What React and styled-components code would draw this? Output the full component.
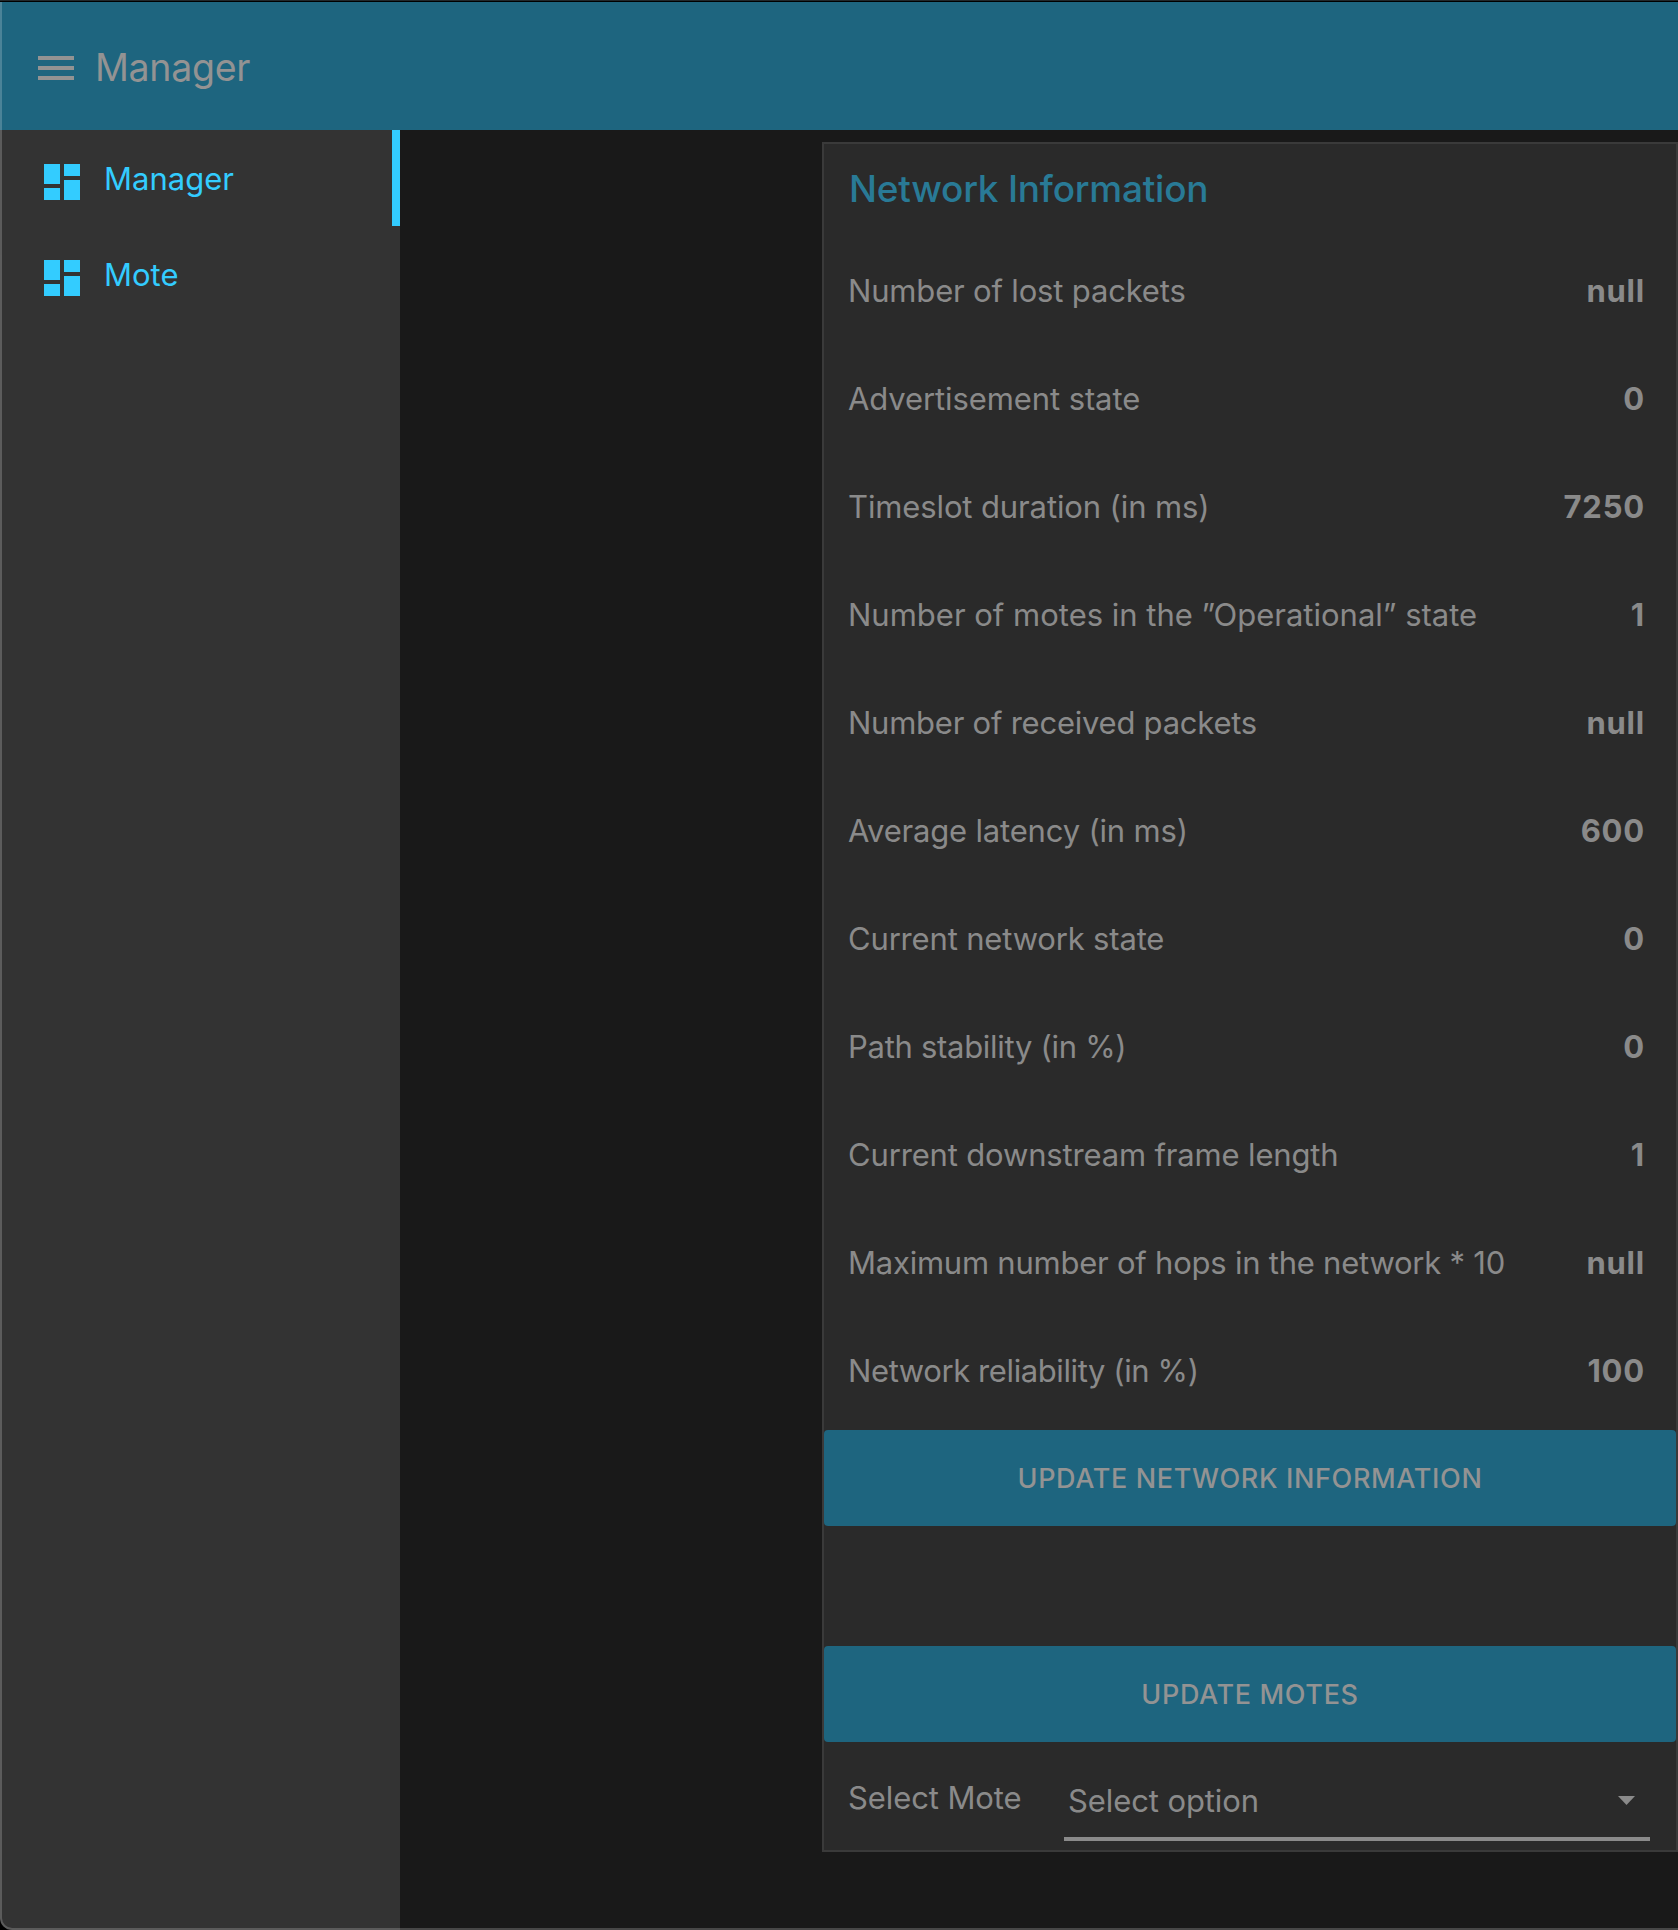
import React from 'react';
import styled, { createGlobalStyle } from 'styled-components';

const GlobalStyle = createGlobalStyle`
  *, *::before, *::after { box-sizing: border-box; }
  html, body { margin: 0; background: #000; }
  body { font-family: Inter, 'Liberation Sans', sans-serif; }
`;

const Window = styled.div`
  position: relative;
  display: flex;
  flex-direction: column;
  width: 1678px;
  height: 1930px;
  overflow: hidden;
  background: #191919;
  border-top: 1px solid #22282b;
  border-bottom-left-radius: 12px;
  &::after {
    content: '';
    position: absolute;
    inset: 1px 0 0 0;
    border-left: 2px solid rgba(255, 255, 255, 0.2);
    border-bottom: 2px solid rgba(255, 255, 255, 0.2);
    border-bottom-left-radius: 12px;
    pointer-events: none;
  }
`;

const AppBar = styled.header`
  display: flex;
  align-items: center;
  gap: 21px;
  flex: none;
  height: 129px;
  padding: 3px 38px 0;
  border-top: 1px solid #000;
  background: #1e657f;
  color: #939393;
`;

const MenuIcon = styled.svg`
  width: 36px;
  height: 24px;
  fill: currentColor;
`;

const AppTitle = styled.h1`
  margin: 0;
  font-size: 37.5px;
  font-weight: 400;
  line-height: 48px;
  letter-spacing: -0.3px;
`;

const Body = styled.div`
  display: flex;
  flex: 1;
  min-height: 0;
`;

const Sidebar = styled.nav`
  flex: none;
  width: 400px;
  background: #333333;
`;

const NavItem = styled.a`
  display: flex;
  align-items: center;
  gap: 24px;
  height: 96px;
  padding: 0 0 0 44px;
  border-right: 8px solid ${(p) => (p.$active ? '#33ccff' : 'transparent')};
  color: #33ccff;
`;

const DashIcon = styled.svg`
  width: 36px;
  height: 36px;
  margin-top: 8px;
  fill: currentColor;
`;

const NavText = styled.span`
  padding-top: 2px;
  font-size: 31px;
  line-height: 40px;
`;

const Main = styled.main`
  flex: 1;
  display: flex;
  justify-content: flex-end;
  align-items: flex-start;
  padding-top: 12px;
`;

const Card = styled.section`
  width: 856px;
  height: 1710px;
  background: #2a2a2a;
  border: 2px solid #3a3a3a;
  color: #8a8a8a;
`;

const CardTitle = styled.h2`
  margin: 0;
  height: 93px;
  padding: 20px 25px 0;
  color: #297a96;
  font-size: 37px;
  font-weight: 500;
  line-height: 50px;
  letter-spacing: -0.23px;
`;

const InfoRow = styled.div`
  display: flex;
  align-items: center;
  justify-content: space-between;
  height: 108px;
  padding: 0 31px 0 24px;
`;

const Label = styled.span`
  font-size: 31px;
  line-height: 40px;
  white-space: nowrap;
  letter-spacing: ${(p) => p.$tracking || 0}px;
`;

const Value = styled.b`
  font-size: 31px;
  font-weight: 650;
  line-height: 40px;
  letter-spacing: 0.8px;
`;

const ActionButton = styled.button`
  display: block;
  width: 100%;
  height: 96px;
  margin: ${(p) => p.$top || 0}px 0 0;
  padding: 1px 0 0;
  border: 0;
  border-radius: 4px;
  background: #1e657f;
  color: #939393;
  font: 500 27px/95px Inter, 'Liberation Sans', sans-serif;
  letter-spacing: 0.64px;
  text-transform: uppercase;
`;

const SelectRow = styled.div`
  display: flex;
  height: 108px;
  padding: 0 26px 0 24px;
  justify-content: space-between;
`;

const SelectLabel = styled(Label)`
  padding-top: 36px;
`;

const Select = styled.div`
  display: flex;
  align-items: center;
  justify-content: space-between;
  width: 586px;
  height: 60px;
  margin-top: 39px;
  padding: 0 15px 17px 4px;
  border-bottom: 4px solid #8a8a8a;
`;

const Arrow = styled.svg`
  width: 17px;
  height: 9px;
  fill: currentColor;
`;

const rows = [
  { label: 'Number of lost packets', value: 'null', tracking: -0.17 },
  { label: 'Advertisement state', value: '0', tracking: -0.1 },
  { label: 'Timeslot duration (in ms)', value: '7250', tracking: -0.12 },
  { label: 'Number of motes in the ”Operational” state', value: '1', tracking: 0 },
  { label: 'Number of received packets', value: 'null', tracking: -0.24 },
  { label: 'Average latency (in ms)', value: '600', tracking: -0.19 },
  { label: 'Current network state', value: '0', tracking: -0.17 },
  { label: 'Path stability (in %)', value: '0', tracking: -0.29 },
  { label: 'Current downstream frame length', value: '1', tracking: -0.16 },
  { label: 'Maximum number of hops in the network * 10', value: 'null', tracking: -0.23 },
  { label: 'Network reliability (in %)', value: '100', tracking: -0.4 },
];

const Dashboard = () => (
  <DashIcon viewBox="0 0 36 36">
    <path d="M0 0h16v20H0zM20 0h16v12H20zM0 24h16v12H0zM20 16h16v20H20z" />
  </DashIcon>
);

export default function App() {
  return (
    <>
      <GlobalStyle />
      <Window>
        <AppBar>
          <MenuIcon viewBox="0 0 36 24">
            <path d="M0 0h36v4H0zM0 10h36v4H0zM0 20h36v4H0z" />
          </MenuIcon>
          <AppTitle>Manager</AppTitle>
        </AppBar>
        <Body>
          <Sidebar>
            <NavItem $active>
              <Dashboard />
              <NavText>Manager</NavText>
            </NavItem>
            <NavItem>
              <Dashboard />
              <NavText>Mote</NavText>
            </NavItem>
          </Sidebar>
          <Main>
            <Card>
              <CardTitle>Network Information</CardTitle>
              {rows.map((row) => (
                <InfoRow key={row.label}>
                  <Label $tracking={row.tracking}>{row.label}</Label>
                  <Value>{row.value}</Value>
                </InfoRow>
              ))}
              <ActionButton $top={5}>Update network information</ActionButton>
              <ActionButton $top={120}>Update motes</ActionButton>
              <SelectRow>
                <SelectLabel $tracking={-0.1}>Select Mote</SelectLabel>
                <Select>
                  <Label $tracking={-0.1}>Select option</Label>
                  <Arrow viewBox="0 0 17 9">
                    <path d="M0 0h17l-8.500 9z" />
                  </Arrow>
                </Select>
              </SelectRow>
            </Card>
          </Main>
        </Body>
      </Window>
    </>
  );
}
